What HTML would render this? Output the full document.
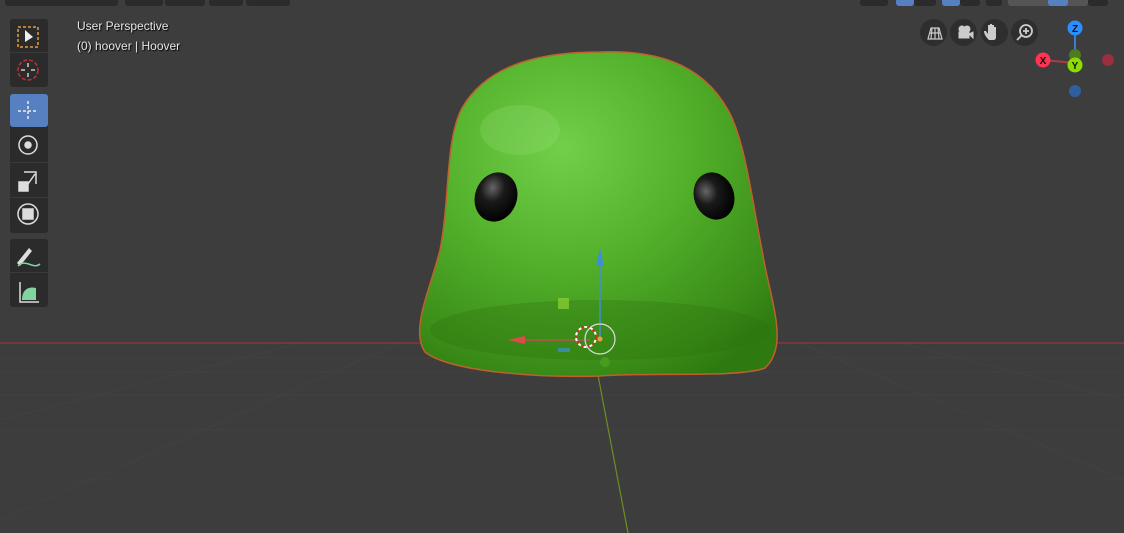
<!DOCTYPE html>
<html><head><style>
body{margin:0;width:1124px;height:533px;overflow:hidden;background:#3d3d3d;font-family:"Liberation Sans",sans-serif;position:relative}
.t{position:absolute;background:#2b2b2b;border-radius:3px}
.hb{position:absolute;top:-4px;height:10px;background:#2b2b2b;border-radius:3px}
.lbl{position:absolute;color:#e6e6e6;font-size:12px;left:77px;text-shadow:1px 1px 1px #000}
.nav{position:absolute;top:19px;width:27px;height:27px;border-radius:50%;background:#2e2e2e}
.sep{position:absolute;left:10px;width:38px;height:1px;background:#3a3a3a}
</style></head><body>
<svg width="1124" height="533" style="position:absolute;left:0;top:0">
<defs>
<radialGradient id="g" cx="0.4" cy="0.3" r="0.8">
<stop offset="0" stop-color="#72cf4a"/><stop offset="0.45" stop-color="#52b02a"/><stop offset="0.85" stop-color="#3a8c18"/><stop offset="1" stop-color="#2e7a10"/>
</radialGradient>
<radialGradient id="e" cx="0.35" cy="0.35" r="0.7"><stop offset="0" stop-color="#666"/><stop offset="0.4" stop-color="#1a1a1a"/><stop offset="1" stop-color="#000"/></radialGradient>
</defs>
<g stroke="#444" stroke-width="1" opacity="0.7">
<line x1="0" y1="395" x2="1124" y2="395"/><line x1="0" y1="430" x2="1124" y2="430"/><line x1="0" y1="480" x2="1124" y2="480"/>
<line x1="0" y1="372" x2="1124" y2="372"/><line x1="0" y1="358" x2="1124" y2="358"/>
<line x1="400" y1="343" x2="0" y2="520"/><line x1="800" y1="343" x2="1124" y2="480"/><line x1="300" y1="343" x2="0" y2="420"/><line x1="900" y1="343" x2="1124" y2="400"/>
</g>
<line x1="0" y1="343" x2="1124" y2="343" stroke="#8a3a44" stroke-width="1.2"/>
<line x1="597" y1="370" x2="628" y2="533" stroke="#6b8e23" stroke-width="1.2"/>
<path d="M600 52 C650 50 700 60 728 110 C745 140 752 200 762 250 C770 300 790 345 765 368 C740 378 650 372 600 376 C540 378 450 372 425 352 C410 330 430 290 440 250 C450 200 445 140 462 108 C490 60 550 52 600 52 Z" fill="url(#g)" stroke="#c0602a" stroke-width="1.5"/>
<ellipse cx="520" cy="130" rx="40" ry="25" fill="#9be07a" opacity="0.25"/>
<ellipse cx="600" cy="330" rx="170" ry="30" fill="#2a700c" opacity="0.3"/>
<ellipse cx="496" cy="197" rx="21" ry="25" fill="url(#e)" transform="rotate(20 496 197)"/>
<ellipse cx="714" cy="196" rx="20" ry="24" fill="url(#e)" transform="rotate(-20 714 196)"/>
<line x1="600" y1="258" x2="600" y2="338" stroke="#3f8fd8" stroke-width="1.5"/>
<polygon points="600,248 596,266 604,266" fill="#3f8fd8"/>
<line x1="525" y1="340" x2="590" y2="340" stroke="#c05050" stroke-width="1.5"/>
<polygon points="508,340 525,336 525,344" fill="#e04a4a"/>
<rect x="558" y="298" width="11" height="11" fill="#8fd13a" opacity="0.7"/>
<rect x="558" y="348" width="12" height="4" fill="#3a8fc0" opacity="0.8"/>
<circle cx="586" cy="337" r="10" fill="none" stroke="#d03020" stroke-width="2" stroke-dasharray="3 3"/>
<circle cx="586" cy="337" r="10" fill="none" stroke="#fff" stroke-width="2" stroke-dasharray="3 3" stroke-dashoffset="3"/>
<circle cx="600" cy="339" r="15" fill="none" stroke="#ddd" stroke-width="1.2"/>
<circle cx="600" cy="339" r="2.5" fill="#f0a030"/>
<circle cx="605" cy="362" r="5" fill="#4a9a20"/>
<line x1="1075" y1="35" x2="1075" y2="65" stroke="#3a7fc8" stroke-width="2"/>
<line x1="1043" y1="60" x2="1075" y2="63" stroke="#b03a4a" stroke-width="2"/>
<circle cx="1075" cy="55" r="6" fill="#4e7a22"/>
<circle cx="1108" cy="60" r="6" fill="#9a2f3e"/>
<circle cx="1075" cy="91" r="6" fill="#2e60a0"/>
<circle cx="1075" cy="28" r="7.5" fill="#2a8fff"/><text x="1075" y="32" font-size="10" text-anchor="middle" font-family="Liberation Sans" font-weight="bold" fill="#111">Z</text>
<circle cx="1043" cy="60" r="7.5" fill="#ff3352"/><text x="1043" y="64" font-size="10" text-anchor="middle" font-family="Liberation Sans" font-weight="bold" fill="#111">X</text>
<circle cx="1075" cy="65" r="7.5" fill="#8bdc00"/><text x="1075" y="69" font-size="10" text-anchor="middle" font-family="Liberation Sans" font-weight="bold" fill="#111">Y</text>
</svg>
<div class="hb" style="left:5px;width:113px"></div>
<div class="hb" style="left:125px;width:38px"></div>
<div class="hb" style="left:165px;width:40px"></div>
<div class="hb" style="left:209px;width:34px"></div>
<div class="hb" style="left:246px;width:44px"></div>
<div class="hb" style="left:860px;width:28px"></div>
<div class="hb" style="left:896px;width:18px;background:#5680c2"></div>
<div class="hb" style="left:914px;width:22px"></div>
<div class="hb" style="left:942px;width:18px;background:#5680c2"></div>
<div class="hb" style="left:960px;width:20px"></div>
<div class="hb" style="left:986px;width:16px"></div>
<div class="hb" style="left:1008px;width:80px;background:#555"></div>
<div class="hb" style="left:1048px;width:20px;background:#5680c2"></div>
<div class="hb" style="left:1088px;width:20px"></div>
<div class="t" style="left:10px;top:19px;width:38px;height:68px"></div>
<div class="t" style="left:10px;top:94px;width:38px;height:139px"></div>
<div class="t" style="left:10px;top:94px;width:38px;height:33px;background:#5680c2"></div>
<div class="t" style="left:10px;top:239px;width:38px;height:68px"></div>
<div class="sep" style="top:52px"></div><div class="sep" style="top:162px"></div><div class="sep" style="top:197px"></div><div class="sep" style="top:272px"></div>
<svg width="60" height="310" style="position:absolute;left:0;top:0" fill="none" stroke="#ddd" stroke-width="1.5">
<rect x="18" y="27" width="20" height="20" stroke="#e0a040" stroke-dasharray="3 2"/>
<polygon points="25,30 25,42 33,37" fill="#eee" stroke="none"/>
<circle cx="28" cy="70" r="10" stroke="#c03030" stroke-dasharray="4 2"/>
<path d="M28 63v4M28 73v4M21 70h4M31 70h4" stroke="#ccc"/>
<path d="M28 101v20M18 111h20" stroke="#eee" stroke-dasharray="3 2"/>
<circle cx="28" cy="145" r="9" stroke="#ddd"/><circle cx="28" cy="145" r="3" fill="#ddd"/>
<rect x="19" y="182" width="9" height="9" fill="#ddd"/><path d="M24 172h12v12M28 184l7-10" />
<circle cx="28" cy="214" r="10"/><rect x="23" y="209" width="10" height="10" fill="#ddd"/>
<path d="M17 263l12-15 3 3-12 15z" fill="#ddd" stroke="none"/><path d="M18 266c8-8 15 4 22-2" stroke="#7fd4a0"/>
<path d="M20 282v20h19" /><path d="M22 300c0-10 6-14 14-12v12z" fill="#7fd4a0" stroke="none"/>
</svg>
<div class="lbl" style="top:19px">User Perspective</div>
<div class="lbl" style="top:39px">(0) hoover | Hoover</div>
<div class="nav" style="left:920px"></div><div class="nav" style="left:950px"></div><div class="nav" style="left:981px"></div><div class="nav" style="left:1011px"></div>
<svg width="130" height="30" style="position:absolute;left:920px;top:19px" fill="#ccc" stroke="#ccc">
<path d="M8 20l3-11h8l3 11zM10 14h10M15 9v11M12 9l-1 11M18 9l1 11" fill="none" stroke-width="1.2"/>
<circle cx="42" cy="10" r="3"/><circle cx="47" cy="10" r="3"/><rect x="39" y="13" width="10" height="6"/><path d="M49 15l4-2v6z"/>
<path d="M69 21c-3-3-5-6-5-9l2 0 2 3v-9h2v8 -9h2v9-8h2v8-6h2v10c0 2-1 3-3 3z" stroke="none"/>
<circle cx="106" cy="12" r="6" fill="none" stroke-width="1.8"/><path d="M102 16l-5 5M103 12h6M106 9v6" stroke-width="1.8" fill="none"/>
</svg>
</body></html>
